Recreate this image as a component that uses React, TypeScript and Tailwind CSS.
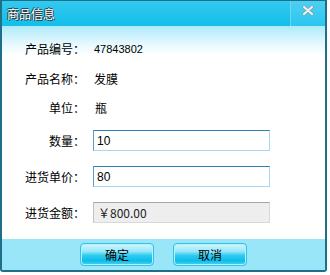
import React from "react";

const cjk = { fontFamily: '"Noto Sans CJK SC", "Liberation Sans", sans-serif' };
const num = { fontFamily: '"Liberation Sans", "Noto Sans CJK SC", sans-serif' };

function Label({ children }: { children: React.ReactNode }) {
  return (
    <div className="w-[83px] shrink-0 text-right text-[12px] leading-[20px] text-black" style={cjk}>
      {children}
    </div>
  );
}

function Btn({ children }: { children: React.ReactNode }) {
  return (
    <div
      className="w-[74px] h-[23px] rounded-[4px] border border-[#2fc2ea] flex items-center justify-center text-[12px] text-black shadow-[inset_0_0_0_1px_#b8f0fc] bg-[linear-gradient(to_bottom,#d2f6fd_0%,#98e8f9_35%,#2ccbf0_55%,#0dbde8_80%,#4fd3f2_100%)]"
      style={cjk}
    >
      {children}
    </div>
  );
}

export default function App() {
  return (
    <div className="w-[330px] h-[275px] bg-white">
      <div className="w-[327px] h-[272px] border-t border-l-2 border-r-2 border-b-2 border-[#1d7088] rounded-b-[3px] flex flex-col overflow-hidden">
        {/* title bar */}
        <div className="h-[25px] shrink-0 flex bg-[linear-gradient(to_bottom,#34c9f0,#12bee9)]">
          <div
            className="flex-1 pl-[5px] flex items-center text-[12px] text-white [text-shadow:1px_1px_0_#2a3a40,-1px_0_0_#2a3a40,0_-1px_0_#2a3a40]"
            style={cjk}
          >
            商品信息
          </div>
          <div className="w-[35px] border-l border-[#6fd6f2] bg-[linear-gradient(to_bottom,#4cd0f2,#2cc6ef)] flex justify-center pt-[5px]">
            <svg width="12" height="9" viewBox="0 0 12 9">
              <path d="M2 1 L10 8 M10 1 L2 8" stroke="#8a9aa2" strokeWidth="3.4" strokeLinecap="round" />
              <path d="M2 1 L10 8 M10 1 L2 8" stroke="#eef3f5" strokeWidth="2" strokeLinecap="round" />
            </svg>
          </div>
        </div>
        {/* content */}
        <div className="h-[213px] shrink-0 bg-[linear-gradient(to_bottom,#aeeafa_0px,#e6f9fe_18px,#ffffff_30px)] pt-[13px] flex flex-col">
          <div className="flex items-center h-[20px]">
            <Label>产品编号：</Label>
            <div className="ml-[9px] text-[11px] text-black" style={num}>47843802</div>
          </div>
          <div className="flex items-center h-[20px] mt-[10px]">
            <Label>产品名称：</Label>
            <div className="ml-[9px] text-[12px] text-black" style={cjk}>发膜</div>
          </div>
          <div className="flex items-center h-[20px] mt-[9px]">
            <Label>单位：</Label>
            <div className="ml-[10px] text-[12px] text-black" style={cjk}>瓶</div>
          </div>
          <div className="flex items-center h-[21px] mt-[12px]">
            <Label>数量：</Label>
            <div className="ml-[8px] w-[177px] h-[21px] border border-[#a9d6f0] border-t-[#2f7fb4] border-l-[#5a9fcc] bg-white pl-[3px] flex items-center text-[12px] text-black" style={num}>
              10
            </div>
          </div>
          <div className="flex items-center h-[21px] mt-[15px]">
            <Label>进货单价：</Label>
            <div className="ml-[8px] w-[177px] h-[21px] border border-[#a9d6f0] border-t-[#2f7fb4] border-l-[#5a9fcc] bg-white pl-[3px] flex items-center text-[12px] text-black" style={num}>
              80
            </div>
          </div>
          <div className="flex items-center h-[21px] mt-[15px]">
            <Label>进货金额：</Label>
            <div className="ml-[8px] w-[177px] h-[21px] border border-[#d6d9dc] border-t-[#a4a6a8] border-l-[#c0c2c4] bg-[#eeeeee] pl-[4px] flex items-center text-[12px] text-[#222]" style={cjk}>
              ￥800.00
            </div>
          </div>
        </div>
        {/* footer */}
        <div className="flex-1 bg-[#98e6f7] flex items-start pt-[4px]">
          <div className="ml-[78px]">
            <Btn>确定</Btn>
          </div>
          <div className="ml-[19px]">
            <Btn>取消</Btn>
          </div>
        </div>
      </div>
    </div>
  );
}
